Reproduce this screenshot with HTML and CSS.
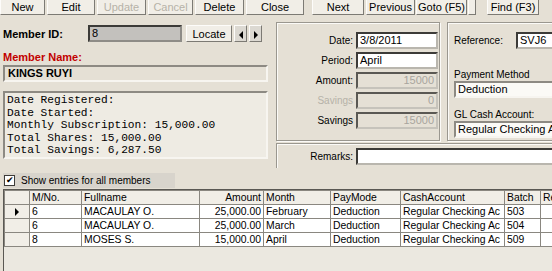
FILE: index.html
```html
<!DOCTYPE html>
<html lang="en">
<head>
  <meta charset="UTF-8">
  <title>Member Savings</title>
  <link rel="stylesheet" href="styles.css">
</head>
<body>
  <div class="toolbar">
    <button class="tb b-new">New</button>
    <button class="tb b-edit">Edit</button>
    <button class="tb b-update" disabled>Update</button>
    <button class="tb b-cancel" disabled>Cancel</button>
    <button class="tb b-delete">Delete</button>
    <button class="tb b-close">Close</button>
    <button class="tb b-next">Next</button>
    <button class="tb b-prev">Previous</button>
    <button class="tb b-goto">Goto (F5)</button>
    <button class="tb b-blank"></button>
    <button class="tb b-find">Find (F3)</button>
  </div>

  <div class="top">
    <div class="left">
      <div class="id-row">
        <label class="id-label">Member ID:</label>
        <div class="id-box">8</div>
        <button class="btn locate">Locate</button>
        <button class="btn arrow"><span class="tri tri-left"></span></button>
        <button class="btn arrow"><span class="tri tri-right"></span></button>
      </div>
      <div class="name-label">Member Name:</div>
      <div class="name-box">KINGS RUYI</div>
      <div class="info-box">
        <div>Date Registered:</div>
        <div>Date Started:</div>
        <div>Monthly Subscription: 15,000.00</div>
        <div>Total Shares: 15,000.00</div>
        <div>Total Savings: 6,287.50</div>
      </div>
    </div>

    <div class="right">
      <div class="groups">
        <div class="group g-entry">
          <div class="frow"><span class="flabel">Date:</span><div class="field">3/8/2011</div></div>
          <div class="frow"><span class="flabel">Period:</span><div class="field">April</div></div>
          <div class="frow"><span class="flabel">Amount:</span><div class="field off">15000</div></div>
          <div class="frow"><span class="flabel dim">Savings</span><div class="field off">0</div></div>
          <div class="frow"><span class="flabel">Savings</span><div class="field off">15000</div></div>
        </div>
        <div class="group g-ref">
          <div class="ref-row"><span class="ref-label">Reference:</span><div class="field ref">SVJ6</div></div>
          <div class="stack-label pm">Payment Method</div>
          <div class="field wide">Deduction</div>
          <div class="stack-label">GL Cash Account:</div>
          <div class="field wide">Regular Checking Ac</div>
        </div>
      </div>
      <div class="group remarks">
        <span class="flabel">Remarks:</span><div class="field rem"></div>
      </div>
    </div>
  </div>

  <div class="check-row">
    <span class="checkbox">&#10004;</span>
    <span class="check-text">Show entries for all members</span>
  </div>

  <div class="grid-wrap">
    <table class="grid">
      <colgroup>
        <col style="width:25px"><col style="width:52px"><col style="width:118px"><col style="width:64px">
        <col style="width:67px"><col style="width:70px"><col style="width:104px"><col style="width:36px"><col style="width:40px">
      </colgroup>
      <thead>
        <tr><th></th><th>M/No.</th><th>Fullname</th><th class="num">Amount</th><th>Month</th><th>PayMode</th><th>CashAccount</th><th>Batch</th><th>Re</th></tr>
      </thead>
      <tbody>
        <tr><td class="ind"><span class="tri tri-right"></span></td><td>6</td><td>MACAULAY O.</td><td class="num">25,000.00</td><td>February</td><td>Deduction</td><td>Regular Checking Ac</td><td>503</td><td></td></tr>
        <tr><td class="ind"></td><td>6</td><td>MACAULAY O.</td><td class="num">25,000.00</td><td>March</td><td>Deduction</td><td>Regular Checking Ac</td><td>504</td><td></td></tr>
        <tr><td class="ind"></td><td>8</td><td>MOSES S.</td><td class="num">15,000.00</td><td>April</td><td>Deduction</td><td>Regular Checking Ac</td><td>509</td><td></td></tr>
      </tbody>
    </table>
  </div>
</body>
</html>
```

FILE: styles.css
```css
body {
  margin: 0;
  width: 552px;
  height: 271px;
  overflow: hidden;
  background-color: #e5e0d5;
  font-family: "Liberation Sans", Arial, sans-serif;
  font-size: 11px;
  color: #000;
}
button {
  font-family: inherit;
  font-size: 11px;
  padding: 0;
  color: #000;
}

/* toolbar */
.toolbar {
  display: flex;
  height: 15px;
}
.tb {
  height: 15px;
  margin-right: 2px;
  background: #f1eee7;
  border: 1px solid;
  border-color: #fdfcfa #7c7a74 #7c7a74 #fdfcfa;
  border-top: none;
  line-height: 13px;
}
.tb:disabled {
  color: #b6b2a8;
}
.b-new { width: 45px; }
.b-edit { width: 48px; }
.b-update { width: 49px; }
.b-cancel { width: 45px; }
.b-delete { width: 49px; }
.b-close { width: 58px; margin-right: 8px; }
.b-next { width: 52px; }
.b-prev { width: 49px; margin-right: 1px; }
.b-goto { width: 51px; margin-right: 1px; }
.b-blank { width: 8px; margin-right: 11px; }
.b-find { width: 52px; }

/* top area */
.top {
  display: flex;
  height: 153px;
}
.left {
  width: 265px;
  padding: 10px 0 0 3px;
}
.id-row {
  display: flex;
  align-items: center;
  height: 17px;
}
.id-label {
  width: 85px;
  font-weight: bold;
}
.id-box {
  width: 88px;
  height: 13px;
  padding-left: 2px;
  background: #c3c1bd;
  border: 2px solid;
  border-color: #3c3b38 #8e8c87 #8e8c87 #3c3b38;
  line-height: 13px;
}
.btn {
  height: 17px;
  background: #f1eee7;
  border: 1px solid;
  border-color: #fdfcfa #7c7a74 #7c7a74 #fdfcfa;
}
.locate {
  width: 46px;
  margin-left: 4px;
}
.arrow {
  width: 13px;
  margin-left: 2px;
  background: #dcd9d2;
}
.tri {
  display: inline-block;
  width: 0;
  height: 0;
  border-top: 4px solid transparent;
  border-bottom: 4px solid transparent;
  vertical-align: middle;
}
.tri-left { border-right: 4px solid #000; }
.tri-right { border-left: 4px solid #000; }

.name-label {
  margin-top: 9px;
  font-weight: bold;
  color: #c20000;
  line-height: 13px;
}
.name-box {
  height: 13px;
  margin-top: 1px;
  padding-left: 3px;
  font-weight: bold;
  line-height: 13px;
  border: 2px solid;
  border-color: #8d8a83 #f7f5f0 #f7f5f0 #8d8a83;
}
.info-box {
  margin-top: 9px;
  height: 63px;
  padding: 1px 0 0 2px;
  background: #eeebe3;
  border: 2px solid;
  border-color: #8d8a83 #f7f5f0 #f7f5f0 #8d8a83;
  font-family: "Liberation Mono", "Courier New", monospace;
  font-size: 11.2px;
  line-height: 12.6px;
}

.right {
  width: 276px;
  margin-left: 8px;
  padding-top: 7px;
  overflow: hidden;
}
.groups {
  display: flex;
  height: 119px;
}
.group {
  border: 1px solid #9a978f;
  box-shadow: inset 1px 1px 0 #fbfaf7, 1px 1px 0 #fbfaf7;
}
.g-entry {
  width: 162px;
  flex-shrink: 0;
  padding-top: 9px;
}
.frow {
  display: flex;
  align-items: center;
  height: 17px;
  margin-bottom: 3px;
}
.flabel {
  width: 76px;
  text-align: right;
  padding-right: 3px;
  font-size: 10px;
}
.flabel.dim {
  color: #b6b2a8;
}
.field {
  height: 13px;
  padding: 0 2px;
  background: #fff;
  border: 2px solid;
  border-color: #3c3b38 #b9b6ae #b9b6ae #3c3b38;
  line-height: 13px;
  white-space: nowrap;
  overflow: hidden;
}
.g-entry .field {
  width: 74px;
}
.field.off {
  background: transparent;
  color: #a8a59e;
  text-align: right;
  border-color: #5a5853 #c6c3bb #c6c3bb #5a5853;
}
.g-ref {
  width: 130px;
  flex-shrink: 0;
  margin-left: 7px;
  padding: 9px 0 0 6px;
}
.ref-row {
  display: flex;
  align-items: center;
  height: 17px;
}
.ref-label {
  width: 62px;
  font-size: 10px;
}
.field.ref {
  width: 60px;
}
.stack-label {
  margin-top: 10px;
  line-height: 13px;
  font-size: 10px;
}
.stack-label.pm {
  margin-top: 19px;
}
.field.wide {
  width: 120px;
  background: #fbfaf6;
  border-color: #8d8a83 #f7f5f0 #f7f5f0 #8d8a83;
}
.remarks {
  display: flex;
  align-items: center;
  height: 24px;
  margin-top: 2px;
  width: 290px;
}
.field.rem {
  width: 200px;
}

/* checkbox row */
.check-row {
  display: flex;
  align-items: center;
  width: 172px;
  height: 15px;
  margin: 5px 0 0 3px;
  background: #d8d4cc;
  font-size: 10px;
}
.checkbox {
  width: 9px;
  height: 9px;
  margin: 0 6px 0 1px;
  background: #fff;
  border: 1px solid #3c3b38;
  font-size: 9px;
  line-height: 9px;
  text-align: center;
}

/* grid */
.grid-wrap {
  width: 549px;
  height: 82px;
  margin: 1px 0 0 3px;
  background: #ebe8e0;
  border-left: 1px solid #5a5853;
  border-top: 1px solid #5a5853;
  overflow: hidden;
}
.grid {
  border-collapse: collapse;
  table-layout: fixed;
  width: 576px;
  font-size: 10.4px;
}
.grid th,
.grid td {
  height: 13px;
  padding: 0 2px;
  border: 1px solid #8a8780;
  font-weight: normal;
  text-align: left;
  white-space: nowrap;
  overflow: hidden;
  line-height: 13px;
}
.grid th {
  background: #f1eee7;
}
.grid td {
  background: #fff;
}
.grid td.ind {
  background: #f1eee7;
  text-align: center;
}
.grid .num {
  text-align: right;
}
```
